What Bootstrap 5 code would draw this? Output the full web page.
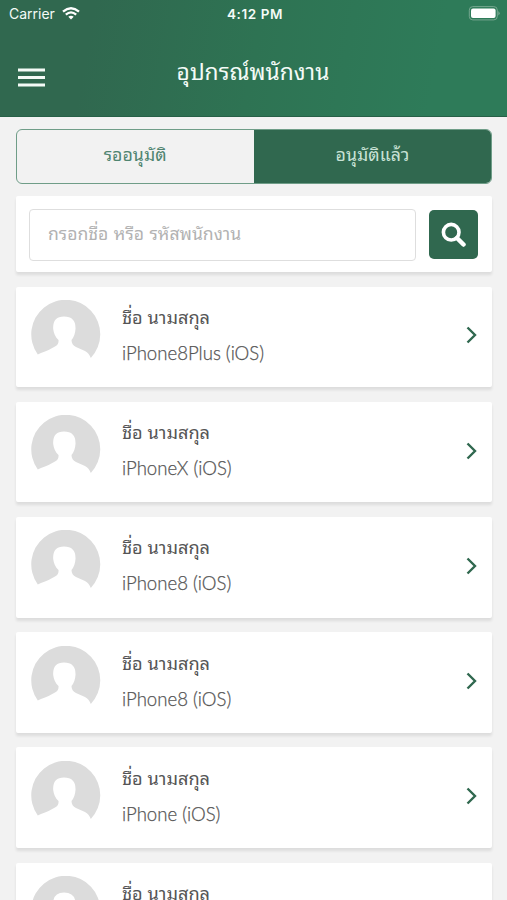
<!DOCTYPE html>
<html lang="th">
<head>
<meta charset="utf-8">
<meta name="viewport" content="width=device-width, initial-scale=1">
<title>อุปกรณ์พนักงาน</title>
<link rel="stylesheet" href="https://cdn.jsdelivr.net/npm/bootstrap@5.3.0/dist/css/bootstrap.min.css">
<style>
:root{--brand:#30684f}
html,body{height:900px;overflow:hidden}
body{background:#f2f2f2;color:#555;font-family:Lato,"Noto Sans Thai Looped",Sarabun,Loma,Garuda,"Noto Sans Thai","Noto Sans",sans-serif}
.top-bar{height:117px;background:linear-gradient(100deg,#30684f 18%,#2e7353 50%,#2e7b59 85%);color:#f4fbf7;border-bottom:1px solid #276047}
.status{height:28px;display:grid;grid-template-columns:1fr auto 1fr;font:14px/28px Inter,sans-serif;padding:0 7px 0 9px}
.clock{font-weight:600;font-size:13.5px;letter-spacing:.55px;margin-left:1px}
.wifi{margin-left:-1px;margin-top:-2px}
.battery{margin-top:-2px}
.title-row{height:89px;display:grid;grid-template-columns:1fr auto 1fr;padding:0 18px}
.menu-btn{padding-top:9px}
.title-text{font-size:22.8px;line-height:87px;margin-left:-1px;font-weight:400}
.page-body{padding:12px 15px 0 15.5px;height:783px;overflow:hidden}
.tabs{height:54.5px;border:1px solid #6f9d88;border-radius:6px;overflow:hidden}
.tabs .btn{border:0;border-radius:0;font-size:17.8px;color:#4f8470;padding:0 0 4px}
.tabs .btn.active{background:var(--brand);color:#c9e2d6}
.panel{background:#fff;border:0;border-radius:2px;box-shadow:0 3px 3px rgba(0,0,0,.09)}
.search{height:76px;margin-top:12.5px;padding:12.5px 14px 0 13.5px}
.search .form-control{height:52px;border:1.5px solid #dedede;border-radius:4px;font-size:17.6px;word-spacing:1px;padding:0 18px 3px}
.search .form-control::placeholder{color:#b2b2b2;opacity:1}
.search .btn{width:49px;height:49px;background:var(--brand);border-radius:5px;margin:1.5px 0 0 13px}
.person{height:100.5px;margin-top:14.7px;padding:0 14px 0 15px}
.avatar{margin-top:-4px}
.info{margin-left:21.5px;font-size:18.6px;line-height:36px;margin-top:-4px}
.person-name{font-size:18.2px}
.device{font-weight:300;-webkit-text-stroke:.25px #555}
.chev{margin-top:-3px}
</style>
<script src="https://cdn.jsdelivr.net/npm/bootstrap@5.3.0/dist/js/bootstrap.bundle.min.js"></script>
</head>
<body>
<svg class="d-none">
<symbol id="avatar" viewBox="0 0 70 70"><path fill="#dcdcdc" d="M6.800 54.500A34.500 34.500 0 1 1 59.800 58Q58 53 54 51L45 47Q40.500 45 40.500 40Q44 36 44.500 29Q45 16.500 33 16.500Q21.500 16.500 22.200 29Q23 36 27.500 40Q28 44.500 24 46.500Q18 50 14 51.500Q9.500 53 6.800 54.500Z"/></symbol>
<symbol id="chev" viewBox="0 0 12 18"><path d="M1.500 1.500L9 9L1.500 16.500" fill="none" stroke="#30684f" stroke-width="2.400"/></symbol>
</svg>
<header class="top-bar">
<div class="status"><div class="d-flex align-items-center gap-2"><span>Carrier</span>
<svg class="wifi" width="18" height="13" viewBox="0 0 18 13" fill="none" stroke="#fff" stroke-width="2.300"><path d="M1 4.700Q9-2.100 17 4.700M3.800 7.600Q9 3.200 14.200 7.600"/><path d="M6.300 9.700Q9 7.600 11.700 9.700L9 12.400Z" fill="#fff" stroke="none"/></svg></div>
<span class="clock">4:12 PM</span>
<div class="d-flex align-items-center justify-content-end"><svg class="battery" width="32" height="15" viewBox="0 0 32 15"><rect x="1.300" y=".6" width="28" height="13.300" rx="3.500" fill="none" stroke="#76a78f"/><rect x="3" y="2.500" width="24.600" height="9.500" rx="2" fill="#fff"/><path d="M30.500 5Q32.500 7.300 30.500 9.600Z" fill="#91b8a4"/></svg></div></div>
<div class="title-row"><div class="d-flex align-items-center menu-btn"><svg width="27" height="19" viewBox="0 0 27 19" stroke="#f4fbf7" stroke-width="3"><path d="M0 2H27M0 9.500H27M0 17H27"/></svg></div><h1 class="title-text mb-0">อุปกรณ์พนักงาน</h1></div>
</header>
<main class="page-body">
<div class="tabs d-flex"><button class="btn w-50">รออนุมัติ</button><button class="btn active w-50">อนุมัติแล้ว</button></div>
<div class="panel search d-flex align-items-start"><input class="form-control" placeholder="กรอกชื่อ หรือ รหัสพนักงาน"><button class="btn p-0 flex-shrink-0 d-flex align-items-center justify-content-center" aria-label="ค้นหา"><svg width="25" height="25" viewBox="0 0 25 25" fill="none" stroke="#fff"><circle cx="10.200" cy="10.200" r="7.800" stroke-width="3.600"/><path d="M16 16L22.500 22.500" stroke-width="4.500" stroke-linecap="round"/></svg></button></div>
<div class="panel person d-flex align-items-center"><svg class="avatar" width="70" height="70"><use href="#avatar"/></svg><div class="info"><div class="person-name">ชื่อ นามสกุล</div><div class="device">iPhone8Plus (iOS)</div></div><svg class="ms-auto chev" width="12" height="18"><use href="#chev"/></svg></div>
<div class="panel person d-flex align-items-center"><svg class="avatar" width="70" height="70"><use href="#avatar"/></svg><div class="info"><div class="person-name">ชื่อ นามสกุล</div><div class="device">iPhoneX (iOS)</div></div><svg class="ms-auto chev" width="12" height="18"><use href="#chev"/></svg></div>
<div class="panel person d-flex align-items-center"><svg class="avatar" width="70" height="70"><use href="#avatar"/></svg><div class="info"><div class="person-name">ชื่อ นามสกุล</div><div class="device">iPhone8 (iOS)</div></div><svg class="ms-auto chev" width="12" height="18"><use href="#chev"/></svg></div>
<div class="panel person d-flex align-items-center"><svg class="avatar" width="70" height="70"><use href="#avatar"/></svg><div class="info"><div class="person-name">ชื่อ นามสกุล</div><div class="device">iPhone8 (iOS)</div></div><svg class="ms-auto chev" width="12" height="18"><use href="#chev"/></svg></div>
<div class="panel person d-flex align-items-center"><svg class="avatar" width="70" height="70"><use href="#avatar"/></svg><div class="info"><div class="person-name">ชื่อ นามสกุล</div><div class="device">iPhone (iOS)</div></div><svg class="ms-auto chev" width="12" height="18"><use href="#chev"/></svg></div>
<div class="panel person d-flex align-items-center"><svg class="avatar" width="70" height="70"><use href="#avatar"/></svg><div class="info"><div class="person-name">ชื่อ นามสกุล</div><div class="device">&nbsp;</div></div></div>
</main>
</body>
</html>
